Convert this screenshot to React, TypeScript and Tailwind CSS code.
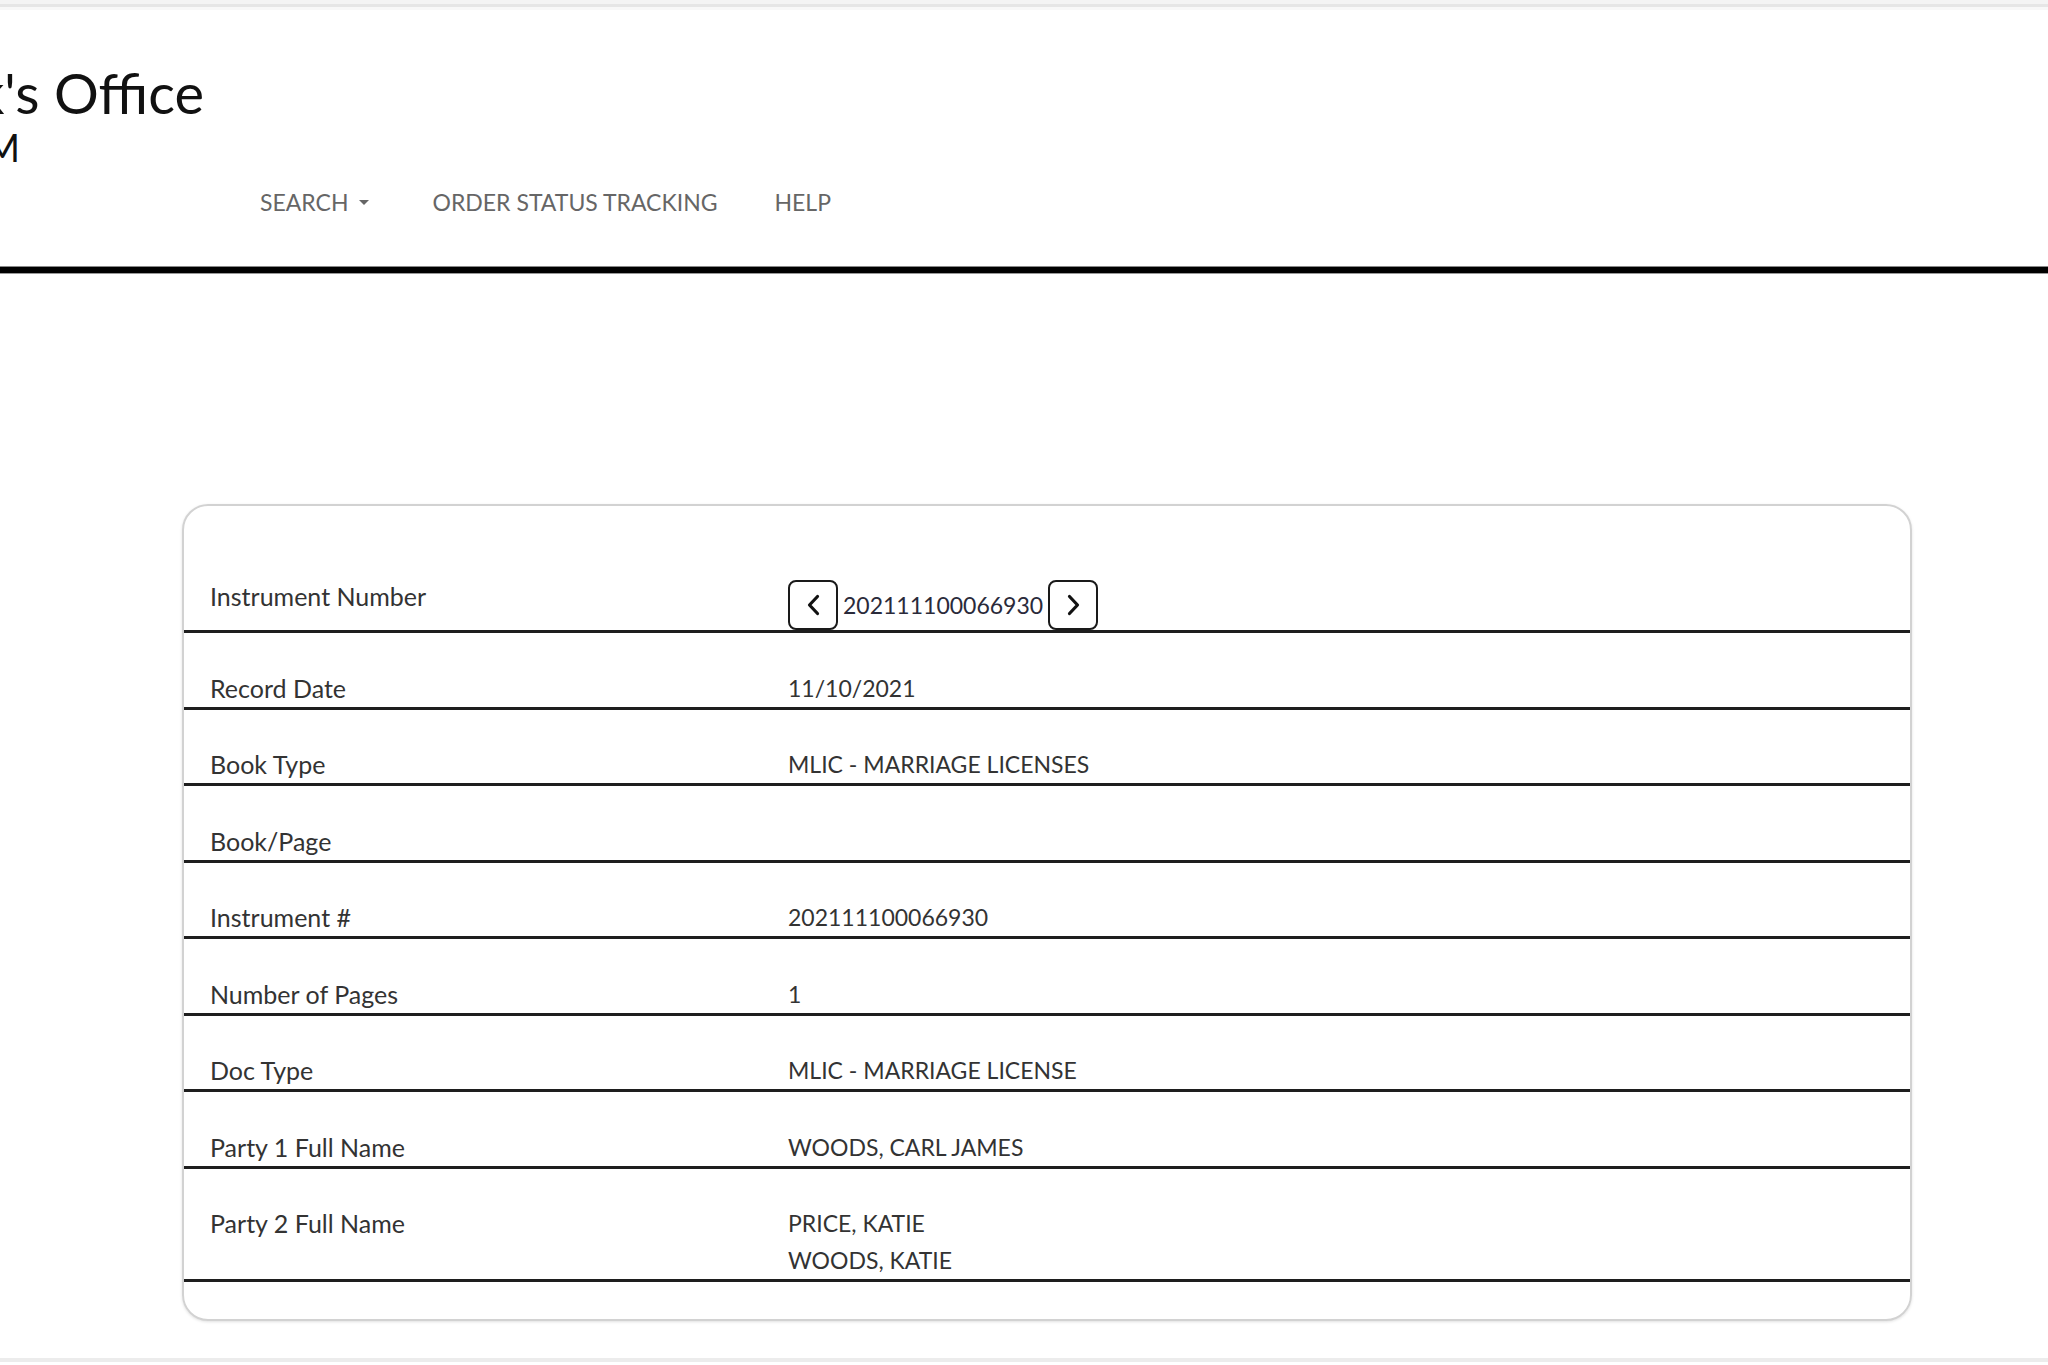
import React from 'react';

type Row = { label: string; values: string[] };

const rows: Row[] = [
  { label: 'Record Date', values: ['11/10/2021'] },
  { label: 'Book Type', values: ['MLIC - MARRIAGE LICENSES'] },
  { label: 'Book/Page', values: [] },
  { label: 'Instrument #', values: ['202111100066930'] },
  { label: 'Number of Pages', values: ['1'] },
  { label: 'Doc Type', values: ['MLIC - MARRIAGE LICENSE'] },
  { label: 'Party 1 Full Name', values: ['WOODS, CARL JAMES'] },
  { label: 'Party 2 Full Name', values: ['PRICE, KATIE', 'WOODS, KATIE'] },
];

const Chevron = ({ dir }: { dir: 'left' | 'right' }) => (
  <svg width="15" height="22" viewBox="0 0 15 22" fill="none">
    <path
      d={dir === 'left' ? 'M11.5 2.5 L3.5 11 L11.5 19.5' : 'M3.5 2.5 L11.5 11 L3.5 19.5'}
      stroke="#111"
      strokeWidth="3.2"
      strokeLinecap="round"
      strokeLinejoin="round"
    />
  </svg>
);

const NavButton = ({ dir }: { dir: 'left' | 'right' }) => (
  <button className="w-[50px] h-[50px] flex items-center justify-center border-2 border-[#1a1a1a] rounded-[8px] bg-white">
    <Chevron dir={dir} />
  </button>
);

export default function App() {
  return (
    <div className="min-h-[1365px] bg-white font-['Lato',sans-serif] text-[#333] overflow-hidden">
      {/* top browser strip */}
      <div className="h-[4px] bg-[#f4f4f4]" />
      <div className="h-[3px] bg-[#e6e6e6]" />
      <div className="h-[3px] bg-[#f8f8f8]" />

      {/* Header */}
      <header className="pt-[55px]">
        <div className="w-[204px] flex justify-end">
          <span className="shrink-0 whitespace-nowrap text-[56px] leading-none text-[#111]">County Clerk's Office</span>
        </div>
        <div className="mt-[7px] w-[20px] flex justify-end">
          <span className="shrink-0 whitespace-nowrap text-[38px] leading-none text-[#111]">AM</span>
        </div>
        <nav className="mt-[18px] pl-[260px] flex items-center text-[23px] leading-[36px] text-[#666]">
          <span className="flex items-center">
            SEARCH
            <span className="ml-[10px] w-0 h-0 border-x-[5px] border-x-transparent border-t-[5px] border-t-[#666]" />
          </span>
          <span className="ml-[64px]">ORDER STATUS TRACKING</span>
          <span className="ml-[57px]">HELP</span>
        </nav>
        <div className="mt-[46px] h-[1px] bg-[#888]" />
        <div className="h-[6px] bg-black" />
        <div className="h-[1px] bg-[#999]" />
      </header>

      {/* Record card */}
      <main className="mt-[230px] ml-[182px] w-[1730px] border-2 border-[#d2d2d2] rounded-[26px] pt-[36px] pb-[37px] shadow-[0_1px_3px_rgba(0,0,0,0.12)]">
        <div className="flex items-start pt-[36px] border-b-[3px] border-[#1e1e1e] leading-[37px]">
          <div className="w-[604px] pl-[26px] text-[25px]">Instrument Number</div>
          <div className="flex items-center mt-[2px] text-[23px]">
            <NavButton dir="left" />
            <span className="mx-[5px] text-[#2a2a3a]">202111100066930</span>
            <NavButton dir="right" />
          </div>
        </div>
        {rows.map((r) => (
          <div key={r.label} className="flex items-start pt-[36.5px] border-b-[3px] border-[#1e1e1e] leading-[37px]">
            <div className="w-[604px] pl-[26px] text-[25px]">{r.label}</div>
            <div className="flex flex-col min-h-[37px] text-[23px]">
              {r.values.map((v) => (
                <span key={v}>{v}</span>
              ))}
            </div>
          </div>
        ))}
      </main>

      <div className="mt-[37px] h-[4px] bg-[#ececec]" />
    </div>
  );
}
